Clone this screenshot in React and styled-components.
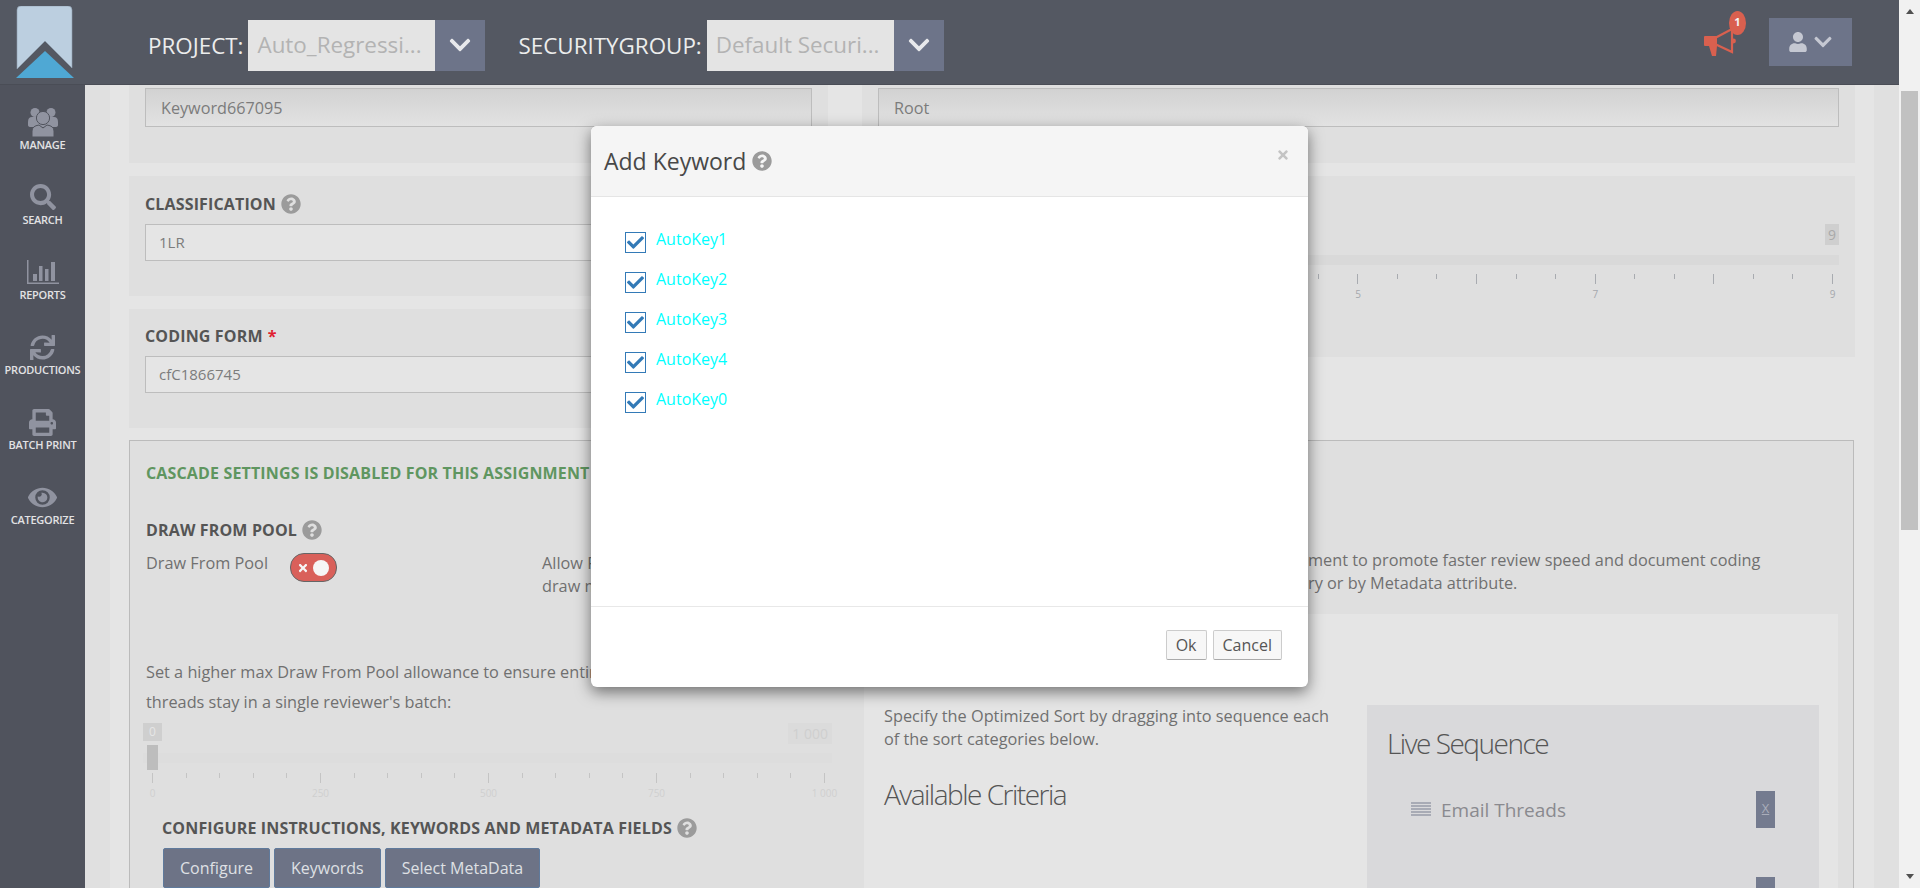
import React from "react";
import styled, { createGlobalStyle } from "styled-components";
import {
  FaCheck,
  FaChevronDown,
  FaEye,
  FaPrint,
  FaQuestionCircle,
  FaSearch,
  FaSync,
  FaTimes,
  FaUser,
} from "react-icons/fa";

const GlobalStyle = createGlobalStyle`
  html, body {
    margin: 0;
    padding: 0;
    overflow: hidden;
    background: #e0e0e0;
    font-family: "Open Sans", "Liberation Sans", sans-serif;
  }
  * { box-sizing: border-box; }
`;

const Shell = styled.div`
  position: relative;
  width: 1920px;
  height: 888px;
  display: flex;
  overflow: hidden;
`;

const Page = styled.div`
  width: 1899px;
  display: flex;
  flex-direction: column;
`;

const Header = styled.header`
  height: 85px;
  flex: none;
  background: #545862;
  border-bottom: 1px solid #4a4d56;
  display: flex;
  align-items: center;
  padding: 6px 47px 0 0;
`;

const LogoBox = styled.div`
  width: 148px;
  height: 85px;
  margin-top: -6px;
  padding: 6px 0 0 16px;
  flex: none;
  align-self: flex-start;
`;

const HeaderLabel = styled.span`
  font-size: 22.4px;
  font-weight: 400;
  color: #eceded;
  margin-right: 5px;
  white-space: nowrap;
`;

const SelectText = styled.div`
  width: 187px;
  height: 51px;
  background: #e4e4e4;
  color: #b3b3b3;
  font-size: 22.4px;
  line-height: 49px;
  padding-left: 9px;
  white-space: nowrap;
  overflow: hidden;
`;

const SelectArrow = styled.div`
  width: 50px;
  height: 51px;
  background: #6d7489;
  color: #e8e9ec;
  font-size: 24px;
  display: flex;
  align-items: center;
  justify-content: center;
  margin-right: ${(p) => p.$gap}px;
`;

const Bell = styled.div`
  position: relative;
  margin: 0 33px 6px auto;
  width: 32px;
  height: 28px;
  color: #d9604f;
  display: flex;
`;

const Badge = styled.span`
  position: absolute;
  left: 25px;
  top: -17px;
  width: 17px;
  height: 24px;
  border-radius: 50%;
  background: #d9604f;
  color: #f4f4f4;
  font-size: 11px;
  font-weight: 700;
  line-height: 22px;
  text-align: center;
`;

const UserButton = styled.div`
  width: 83px;
  height: 48px;
  margin-bottom: 6px;
  background: #6d7489;
  color: #c5c8d2;
  display: flex;
  align-items: center;
  justify-content: center;
  gap: 5px;
  font-size: 20px;
`;

const Below = styled.div`
  flex: 1;
  display: flex;
  min-height: 0;
`;

const Sidebar = styled.nav`
  width: 85px;
  flex: none;
  background: #50535d;
  padding-top: 20px;
`;

const SideItem = styled.div`
  height: 75px;
  display: flex;
  flex-direction: column;
  align-items: center;
`;

const SideIcon = styled.div`
  height: 34px;
  color: #9093a0;
  font-size: ${(p) => p.$size || 26}px;
  display: flex;
  align-items: center;
  justify-content: center;
`;

const SideLabel = styled.span`
  font-size: 11px;
  line-height: 12px;
  font-weight: 600;
  letter-spacing: -0.25px;
  color: #e2e2e4;
  white-space: nowrap;
`;

const Main = styled.main`
  flex: 1;
  min-width: 0;
  background: #e0e0e0;
  padding: 0 25px;
  overflow: hidden;
`;

const Content = styled.div`
  background: #e5e5e5;
  min-height: 100%;
  padding: 0 19px;
`;

const TopGrid = styled.div`
  display: grid;
  grid-template-columns: 699px 993px;
  column-gap: 34px;
  margin-bottom: 12px;
`;

const Column = styled.div`
  display: flex;
  flex-direction: column;
  gap: 13px;
`;

const Section = styled.section`
  height: ${(p) => p.$height}px;
  background: #dfdfdf;
  padding: ${(p) => p.$top}px 16px 0;
`;

const FieldLabel = styled.div`
  height: 20px;
  line-height: 20px;
  font-size: 16px;
  font-weight: 700;
  letter-spacing: 0.15px;
  color: #555;
  display: flex;
  align-items: center;
  gap: 5px;
  margin-bottom: ${(p) => (p.$flush ? 0 : 10)}px;
  white-space: nowrap;
`;

const Help = styled.span`
  color: #9b9b9b;
  font-size: 20px;
  display: inline-flex;
`;

const Required = styled.span`
  color: #e0202f;
  font-weight: 700;
`;

const Input = styled.div`
  height: ${(p) => (p.$shaded ? 39 : 37)}px;
  border: 1px solid #bdbdbd;
  background: ${(p) =>
    p.$shaded ? "linear-gradient(#d2d2d2, #e2e2e2)" : "#e5e5e5"};
  color: #7c7c7c;
  font-size: ${(p) => (p.$shaded ? 16.2 : 15)}px;
  padding: 0 0 ${(p) => (p.$shaded ? 0 : 2)}px ${(p) => (p.$shaded ? 15 : 13)}px;
  display: flex;
  align-items: center;
`;

const ChipRow = styled.div`
  display: flex;
  justify-content: ${(p) => (p.$end ? "flex-end" : "space-between")};
`;

const Chip = styled.span`
  height: ${(p) => p.$height}px;
  padding: 0 ${(p) => p.$pad}px;
  background: ${(p) => p.$bg};
  color: ${(p) => p.$color};
  font-size: ${(p) => p.$size}px;
  line-height: ${(p) => p.$height}px;
`;

const TrackRow = styled.div`
  position: relative;
  height: ${(p) => p.$height}px;
  margin-top: ${(p) => p.$top}px;
  display: flex;
  align-items: center;
`;

const Track = styled.div`
  flex: 1;
  height: 10px;
  background: ${(p) => p.$color};
`;

const Handle = styled.div`
  position: absolute;
  left: 4px;
  top: 0;
  width: 11px;
  height: 25px;
  background: #bdbdbd;
`;

const Ruler = styled.div`
  margin: ${(p) => p.$top}px ${(p) => p.$right}px 0 ${(p) => p.$left}px;
`;

const Ticks = styled.div`
  height: 10px;
  display: flex;
  justify-content: space-between;
`;

const Tick = styled.i`
  width: 1px;
  height: ${(p) => (p.$major ? 10 : 5)}px;
  background: ${(p) => p.$color};
`;

const TickLabels = styled.div`
  display: flex;
  justify-content: space-between;
  margin-top: 4px;
`;

const TickLabel = styled.span`
  width: 1px;
  display: flex;
  justify-content: center;
  font-size: 10px;
  line-height: 12px;
  white-space: nowrap;
  color: ${(p) => p.$color};
`;

const CascadeBox = styled.div`
  border: 1px solid #bbb;
  border-bottom: 0;
  padding: 22px 15px 0 16px;
  width: 1725px;
  background: #dfdfdf;
`;

const CascadeTitle = styled.div`
  height: 20px;
  line-height: 20px;
  font-size: 16px;
  font-weight: 700;
  letter-spacing: 0.15px;
  color: #5f9660;
  margin-bottom: 37px;
  white-space: nowrap;
`;

const CascadeBody = styled.div`
  display: grid;
  grid-template-columns: 718px 974px;
`;

const Pool = styled.div`
  display: grid;
  grid-template-columns: 144px 252px 1fr;
  margin-top: 12px;
  height: 46px;
  font-size: 16.3px;
  line-height: 23px;
  color: #707070;
`;

const Toggle = styled.div`
  width: 47px;
  height: 29px;
  margin-top: 1px;
  border-radius: 14px;
  border: 1px solid #666;
  background: #d9605a;
  color: #f6f6f6;
  font-size: 12px;
  display: flex;
  align-items: center;
  padding-left: 6px;
  gap: 4px;
`;

const ToggleKnob = styled.span`
  width: 16px;
  height: 16px;
  border-radius: 50%;
  background: #f6f6f6;
`;

const ClippedLine = styled.div`
  white-space: nowrap;
`;

const Hint = styled.div`
  margin-top: 59px;
  font-size: 16.3px;
  line-height: 30px;
  color: #707070;
  white-space: nowrap;
`;

const PoolSlider = styled.div`
  margin: 6px 0 0 -3px;
  width: 689px;
`;

const ConfigureBlock = styled.div`
  margin: 19px 0 0 16px;
`;

const ButtonRow = styled.div`
  display: flex;
  gap: 4px;
  margin-left: 1px;
`;

const BlueButton = styled.div`
  height: 40px;
  padding: 0 16px;
  border: 1px solid #5f7a9c;
  border-radius: 2px;
  background: #6d7386;
  color: #dfe0e4;
  font-size: 16px;
  line-height: 38px;
`;

const RightColumn = styled.div`
  padding-top: 29px;
`;

const Intro = styled.div`
  padding-left: 444px;
  height: 46px;
  font-size: 16.3px;
  line-height: 23px;
  color: #707070;
  white-space: nowrap;
`;

const SortPanel = styled.div`
  margin-top: 19px;
  height: 400px;
  background: #e5e5e5;
  padding: 91px 19px 0 20px;
  display: grid;
  grid-template-columns: 483px 452px;
`;

const SortText = styled.p`
  margin: 0 0 23px;
  width: 450px;
  font-size: 16.3px;
  line-height: 23px;
  color: #707070;
`;

const PanelHeading = styled.h3`
  margin: 0;
  height: 40px;
  font-size: 28px;
  line-height: 40px;
  font-weight: 300;
  letter-spacing: -1.5px;
  color: #555;
`;

const LivePanel = styled.div`
  height: 300px;
  background: #d9d9db;
  padding: 18px 0 0 20px;
`;

const LiveRow = styled.div`
  height: 37px;
  margin-top: ${(p) => p.$top}px;
  padding: 0 44px 0 24px;
  display: flex;
  align-items: center;
  font-size: 19px;
  color: #8a8a8f;
`;

const Grip = styled.span`
  width: 20px;
  height: 15px;
  margin-right: 10px;
  background: repeating-linear-gradient(
    #a8abb5 0,
    #a8abb5 2px,
    transparent 2px,
    transparent 3px
  );
`;

const RemoveLink = styled.span`
  margin-left: auto;
  width: 19px;
  height: 37px;
  background: #747b8f;
  color: #a9adba;
  font-size: 13px;
  line-height: 35px;
  text-align: center;
  text-decoration: underline;
`;

const Scrollbar = styled.div`
  width: 21px;
  flex: none;
  background: #f1f1f1;
  display: flex;
  flex-direction: column;
  align-items: center;
  padding: 9px 0;
`;

const ArrowUp = styled.i`
  width: 0;
  height: 0;
  border: 4.5px solid transparent;
  border-top: 0;
  border-bottom: 5px solid #505050;
`;

const ArrowDown = styled(ArrowUp)`
  border-top: 5px solid #505050;
  border-bottom: 0;
  margin-top: auto;
`;

const Thumb = styled.div`
  width: 17px;
  height: 439px;
  margin-top: 77px;
  background: #c1c1c1;
`;

const Modal = styled.div`
  position: absolute;
  left: 591px;
  top: 126px;
  width: 717px;
  height: 561px;
  background: #fff;
  border-radius: 6px;
  box-shadow: 0 5px 15px rgba(0, 0, 0, 0.5);
  display: flex;
  flex-direction: column;
  overflow: hidden;
`;

const ModalHeader = styled.div`
  height: 71px;
  background: #f5f5f5;
  border-bottom: 1px solid #e5e5e5;
  padding: 0 15px 0 13px;
  display: flex;
  align-items: center;
  gap: 6px;
`;

const ModalTitle = styled.h4`
  margin: 0;
  font-size: 23px;
  font-weight: 400;
  color: #484848;
`;

const CloseMark = styled.span`
  margin: -13px 3px 0 auto;
  color: #c4c4c4;
  font-size: 14px;
  display: flex;
`;

const ModalBody = styled.div`
  flex: 1;
  padding: 35px 34px 0;
  display: flex;
  flex-direction: column;
  gap: 19px;
`;

const KeywordRow = styled.label`
  height: 21px;
  display: flex;
  gap: 10px;
`;

const CheckBox = styled.span`
  width: 21px;
  height: 21px;
  border: 1px solid #337ab7;
  color: #337ab7;
  background: #fff;
  font-size: 17px;
  display: flex;
  align-items: center;
  justify-content: center;
`;

const KeywordName = styled.span`
  font-size: 16px;
  line-height: 15px;
  color: #00ffff;
`;

const ModalFooter = styled.div`
  height: 81px;
  flex: none;
  border-top: 1px solid #e8e8e8;
  padding: 23px 26px 0 0;
  display: flex;
  justify-content: flex-end;
  gap: 6px;
`;

const FootButton = styled.div`
  height: 30px;
  padding: 0 9px;
  border: 1px solid #ccc;
  border-bottom-color: #aaa;
  border-radius: 2px;
  background: #f7f7f7;
  color: #555;
  font-size: 16px;
  line-height: 28px;
`;

const Logo = () => (
  <svg width="60" height="72" viewBox="0 0 60 72">
    <path
      d="M1 4 Q1 0 5 0 H52 Q56 0 56 4 V62 L29 35 L1 63 Z"
      fill="#bccfe0"
      stroke="#8fa0b0"
      strokeWidth="0.6"
    />
    <path d="M0 72 L29 45 L58 72 Z" fill="#4fa8d4" />
  </svg>
);

const Megaphone = () => (
  <svg width="32" height="28" viewBox="0 0 32 28" fill="currentColor">
    <path d="M1 8 H13 V18 H1 Q0 18 0 17 V9 Q0 8 1 8 Z" />
    <path d="M5 18 H13 L12 28 H8 Z" />
    <path d="M12 9.5 L28 1 V24 L12 16.5" fill="none" stroke="currentColor" strokeWidth="2.2" />
    <circle cx="29.5" cy="13" r="2.4" />
  </svg>
);

const GroupIcon = () => (
  <svg width="30" height="29" viewBox="0 0 30 29" fill="currentColor">
    <circle cx="7" cy="4.5" r="4.5" />
    <circle cx="23" cy="4.5" r="4.5" />
    <path d="M0 14 Q0 9 4 9 H26 Q30 9 30 14 V17 Q30 19 27 19 H3 Q0 19 0 17 Z" />
    <circle cx="15" cy="10" r="6.6" stroke="#50535d" strokeWidth="1" />
    <path
      d="M4 29 V23 Q4 18 11 17 L15 20 L19 17 Q26 18 26 23 V29 Z"
      stroke="#50535d"
      strokeWidth="1"
    />
  </svg>
);

const StatsIcon = () => (
  <svg width="32" height="24" viewBox="0 0 32 24" fill="currentColor">
    <rect x="0" y="0" width="1.5" height="24" />
    <rect x="0" y="22.5" width="32" height="1.5" />
    <rect x="6" y="14" width="4" height="7" />
    <rect x="12" y="6" width="3.5" height="15" />
    <rect x="18" y="9" width="3.5" height="12" />
    <rect x="24" y="2" width="4" height="19" />
  </svg>
);

const navItems = [
  { label: "MANAGE", icon: <GroupIcon /> },
  { label: "SEARCH", icon: <FaSearch />, size: 26 },
  { label: "REPORTS", icon: <StatsIcon /> },
  { label: "PRODUCTIONS", icon: <FaSync />, size: 25 },
  { label: "BATCH PRINT", icon: <FaPrint />, size: 27 },
  { label: "CATEGORIZE", icon: <FaEye />, size: 29 },
];

const keywords = ["AutoKey1", "AutoKey2", "AutoKey3", "AutoKey4", "AutoKey0"];

const SliderRuler = ({ gaps, every, labels, color, labelColor, ...margins }) => (
  <Ruler {...margins}>
    <Ticks>
      {Array.from({ length: gaps + 1 }, (_, i) => (
        <Tick key={i} $major={i % every === 0} $color={color} />
      ))}
    </Ticks>
    <TickLabels>
      {labels.map((label) => (
        <TickLabel key={label} $color={labelColor}>
          {label}
        </TickLabel>
      ))}
    </TickLabels>
  </Ruler>
);

const App = () => (
  <Shell>
    <GlobalStyle />
    <Page>
      <Header>
        <LogoBox>
          <Logo />
        </LogoBox>
        <HeaderLabel>PROJECT:</HeaderLabel>
        <SelectText>Auto_Regressi...</SelectText>
        <SelectArrow $gap={33}>
          <FaChevronDown />
        </SelectArrow>
        <HeaderLabel>SECURITYGROUP:</HeaderLabel>
        <SelectText>Default Securi...</SelectText>
        <SelectArrow $gap={0}>
          <FaChevronDown />
        </SelectArrow>
        <Bell>
          <Megaphone />
          <Badge>1</Badge>
        </Bell>
        <UserButton>
          <FaUser />
          <FaChevronDown />
        </UserButton>
      </Header>
      <Below>
        <Sidebar>
          {navItems.map((item) => (
            <SideItem key={item.label}>
              <SideIcon $size={item.size}>{item.icon}</SideIcon>
              <SideLabel>{item.label}</SideLabel>
            </SideItem>
          ))}
        </Sidebar>
        <Main>
          <Content>
            <TopGrid>
              <Column>
                <Section $height={78} $top={3}>
                  <Input $shaded>Keyword667095</Input>
                </Section>
                <Section $height={120} $top={18}>
                  <FieldLabel>
                    CLASSIFICATION
                    <Help>
                      <FaQuestionCircle />
                    </Help>
                  </FieldLabel>
                  <Input>1LR</Input>
                </Section>
                <Section $height={119} $top={17}>
                  <FieldLabel>
                    CODING FORM <Required>*</Required>
                  </FieldLabel>
                  <Input>cfC1866745</Input>
                </Section>
              </Column>
              <Column>
                <Section $height={78} $top={3}>
                  <Input $shaded>Root</Input>
                </Section>
                <Section $height={181} $top={48}>
                  <ChipRow $end>
                    <Chip
                      $height={21}
                      $pad={3}
                      $bg="#cfcfcf"
                      $color="#a9a9a9"
                      $size={14}
                    >
                      9
                    </Chip>
                  </ChipRow>
                  <TrackRow $height={10} $top={10}>
                    <Track $color="#d9d9d9" />
                  </TrackRow>
                  <SliderRuler
                    gaps={24}
                    every={3}
                    labels={["1", "3", "5", "7", "9"]}
                    color="#a8abb0"
                    labelColor="#a5a8ad"
                    $top={9}
                    $left={5}
                    $right={6}
                  />
                </Section>
              </Column>
            </TopGrid>
            <CascadeBox>
              <CascadeTitle>
                CASCADE SETTINGS IS DISABLED FOR THIS ASSIGNMENT
              </CascadeTitle>
              <CascadeBody>
                <div>
                  <FieldLabel $flush>
                    DRAW FROM POOL
                    <Help>
                      <FaQuestionCircle />
                    </Help>
                  </FieldLabel>
                  <Pool>
                    <span>Draw From Pool</span>
                    <Toggle>
                      <FaTimes />
                      <ToggleKnob />
                    </Toggle>
                    <div>
                      <ClippedLine>Allow Reviewers to</ClippedLine>
                      <ClippedLine>draw more documents</ClippedLine>
                    </div>
                  </Pool>
                  <Hint>
                    Set a higher max Draw From Pool allowance to ensure entire email
                    <br />
                    threads stay in a single reviewer's batch:
                  </Hint>
                  <PoolSlider>
                    <ChipRow>
                      <Chip
                        $height={18}
                        $pad={6}
                        $bg="#cfcfcf"
                        $color="#e6e6e6"
                        $size={12}
                      >
                        0
                      </Chip>
                      <Chip
                        $height={21}
                        $pad={4}
                        $bg="#dbdbdb"
                        $color="#cfcfcf"
                        $size={14}
                      >
                        1 000
                      </Chip>
                    </ChipRow>
                    <TrackRow $height={25} $top={1}>
                      <Track $color="#dddddd" />
                      <Handle />
                    </TrackRow>
                    <SliderRuler
                      gaps={20}
                      every={5}
                      labels={["0", "250", "500", "750", "1 000"]}
                      color="#c4c4c4"
                      labelColor="#cfcfcf"
                      $top={3}
                      $left={9}
                      $right={7}
                    />
                  </PoolSlider>
                  <ConfigureBlock>
                    <FieldLabel>
                      CONFIGURE INSTRUCTIONS, KEYWORDS AND METADATA FIELDS
                      <Help>
                        <FaQuestionCircle />
                      </Help>
                    </FieldLabel>
                    <ButtonRow>
                      <BlueButton>Configure</BlueButton>
                      <BlueButton>Keywords</BlueButton>
                      <BlueButton>Select MetaData</BlueButton>
                    </ButtonRow>
                  </ConfigureBlock>
                </div>
                <RightColumn>
                  <Intro>
                    <ClippedLine>ment to promote faster review speed and document coding</ClippedLine>
                    <ClippedLine>ry or by Metadata attribute.</ClippedLine>
                  </Intro>
                  <SortPanel>
                    <div>
                      <SortText>
                        Specify the Optimized Sort by dragging into sequence each of
                        the sort categories below.
                      </SortText>
                      <PanelHeading>Available Criteria</PanelHeading>
                    </div>
                    <LivePanel>
                      <PanelHeading>Live Sequence</PanelHeading>
                      <LiveRow $top={28}>
                        <Grip />
                        Email Threads
                        <RemoveLink>X</RemoveLink>
                      </LiveRow>
                      <LiveRow $top={49}>
                        <Grip />
                        Near Duplicates
                        <RemoveLink>X</RemoveLink>
                      </LiveRow>
                    </LivePanel>
                  </SortPanel>
                </RightColumn>
              </CascadeBody>
            </CascadeBox>
          </Content>
        </Main>
      </Below>
    </Page>
    <Scrollbar>
      <ArrowUp />
      <Thumb />
      <ArrowDown />
    </Scrollbar>
    <Modal>
      <ModalHeader>
        <ModalTitle>Add Keyword</ModalTitle>
        <Help>
          <FaQuestionCircle />
        </Help>
        <CloseMark>
          <FaTimes />
        </CloseMark>
      </ModalHeader>
      <ModalBody>
        {keywords.map((name) => (
          <KeywordRow key={name}>
            <CheckBox>
              <FaCheck />
            </CheckBox>
            <KeywordName>{name}</KeywordName>
          </KeywordRow>
        ))}
      </ModalBody>
      <ModalFooter>
        <FootButton>Ok</FootButton>
        <FootButton>Cancel</FootButton>
      </ModalFooter>
    </Modal>
  </Shell>
);

export default App;
